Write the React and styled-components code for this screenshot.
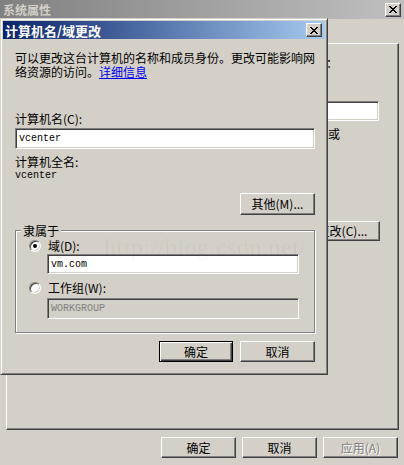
import React from 'react';
import styled, { createGlobalStyle, css } from 'styled-components';

const FACE = '#D4D0C8';
const cjk = `"Noto Sans CJK SC", "Noto Sans", sans-serif`;
const mono = `"Liberation Mono", "DejaVu Sans Mono", monospace`;

const Global = createGlobalStyle`
  html, body { margin: 0; padding: 0; background: ${FACE}; }
  body { font-family: ${cjk}; font-size: 12px; color: #000; }
  * { box-sizing: border-box; }
`;

const Window = styled.div`
  position: relative;
  width: 404px;
  height: 465px;
  overflow: hidden;
  background: ${FACE};
  display: flex;
  flex-direction: column;
`;

const TitleBar = styled.div`
  flex: none;
  height: ${(p) => p.$h}px;
  display: flex;
  align-items: center;
  justify-content: space-between;
  padding: 0 ${(p) => p.$pr}px 0 ${(p) => p.$pl}px;
  background: linear-gradient(90deg, ${(p) => p.$from}, ${(p) => p.$to});
`;

const TitleText = styled.span`
  font-weight: 700;
  font-size: ${(p) => p.$size}px;
  line-height: 1;
  color: ${(p) => p.$color};
  white-space: nowrap;
`;

const CloseBtn = styled.div`
  width: 16px;
  height: 14px;
  background: ${FACE};
  border: 1px solid;
  border-color: #fff #404040 #404040 #fff;
  box-shadow: inset -1px -1px #808080;
  display: flex;
  align-items: center;
  justify-content: center;
`;

const CloseGlyph = () => (
  <svg width="8" height="7" viewBox="0 0 8 7" shapeRendering="crispEdges">
    <g fill="#000">
      <rect x="0" y="0" width="2" height="1" />
      <rect x="6" y="0" width="2" height="1" />
      <rect x="1" y="1" width="2" height="1" />
      <rect x="5" y="1" width="2" height="1" />
      <rect x="2" y="2" width="4" height="1" />
      <rect x="3" y="3" width="2" height="1" />
      <rect x="2" y="4" width="4" height="1" />
      <rect x="1" y="5" width="2" height="1" />
      <rect x="5" y="5" width="2" height="1" />
      <rect x="0" y="6" width="2" height="1" />
      <rect x="6" y="6" width="2" height="1" />
    </g>
  </svg>
);

const OuterBody = styled.div`
  flex: 1;
  display: flex;
  flex-direction: column;
  padding: 24px 5px 0 6px;
`;

const Panel = styled.div`
  height: 387px;
  border: 1px solid;
  border-color: #fff #404040 #404040 #fff;
  box-shadow: inset -1px -1px #808080;
  padding: 12px 18px 0 13px;
  display: flex;
  flex-direction: column;
  overflow: hidden;
`;

const Line = styled.div`
  line-height: 14px;
  white-space: nowrap;
  margin-top: ${(p) => p.$mt || 0}px;
  padding-left: ${(p) => p.$pl || 0}px;
  font-family: ${(p) => (p.$mono ? mono : cjk)};
  font-size: ${(p) => (p.$mono ? 10 : 12)}px;
`;

const FieldGrid = styled.div`
  display: grid;
  grid-template-columns: 224px minmax(0, 1fr);
  row-gap: 6px;
  align-items: center;
  margin-top: 31px;
`;

const TextBox = styled.div`
  height: ${(p) => p.$h}px;
  margin-top: ${(p) => p.$mt || 0}px;
  margin-left: ${(p) => p.$ml || 0}px;
  margin-right: ${(p) => p.$mr || 0}px;
  background: ${(p) => (p.$disabled ? FACE : '#fff')};
  color: ${(p) => (p.$disabled ? '#808080' : '#000')};
  border: 1px solid;
  border-color: #808080 #fff #fff #808080;
  box-shadow: inset 1px 1px #404040, inset -1px -1px ${FACE};
  display: flex;
  align-items: center;
  padding: 0 3px;
  font-family: ${mono};
  font-size: 10px;
  white-space: nowrap;
  overflow: hidden;
`;

const Button = styled.div`
  flex: none;
  width: ${(p) => p.$w || 75}px;
  height: ${(p) => p.$h || 21}px;
  margin-top: ${(p) => p.$mt || 0}px;
  align-self: ${(p) => p.$align || 'auto'};
  background: ${FACE};
  display: flex;
  align-items: center;
  justify-content: center;
  font-size: 12px;
  line-height: 1;
  white-space: nowrap;
  ${(p) =>
    p.$default
      ? css`
          border: 1px solid #000;
          box-shadow: inset 1px 1px #fff, inset -1px -1px #404040, inset -2px -2px #808080;
        `
      : css`
          border: 1px solid;
          border-color: #fff #404040 #404040 #fff;
          box-shadow: inset -1px -1px #808080;
        `}
  ${(p) =>
    p.$disabled &&
    css`
      color: #808080;
      text-shadow: 1px 1px 0 #fff;
    `}
`;

const ButtonRow = styled.div`
  display: flex;
  justify-content: flex-end;
  gap: ${(p) => p.$gap}px;
  margin-top: ${(p) => p.$mt}px;
  margin-right: ${(p) => p.$mr || 0}px;
`;

const Dialog = styled.div`
  position: absolute;
  left: 0;
  top: 18px;
  width: 328px;
  height: 357px;
  background: ${FACE};
  border: 1px solid;
  border-color: ${FACE} #404040 #404040 ${FACE};
  box-shadow: inset 1px 1px #fff, inset -1px -1px #808080;
  padding: 2px;
  display: flex;
  flex-direction: column;
`;

const DialogBody = styled.div`
  flex: 1;
  display: flex;
  flex-direction: column;
  padding: 12px 10px 0 12px;
`;

const Link = styled.span`
  color: #0000ee;
  text-decoration: underline;
`;

const GroupBox = styled.div`
  position: relative;
  height: 103px;
  margin-top: 15px;
  border: 1px solid #808080;
  box-shadow: inset 1px 1px #fff, 1px 1px 0 #fff;
  padding: 8px 15px 0 13px;
  display: flex;
  flex-direction: column;
`;

const Legend = styled.span`
  position: absolute;
  top: -7px;
  left: 5px;
  padding: 0 2px;
  background: ${FACE};
  line-height: 14px;
`;

const RadioRow = styled.div`
  display: flex;
  align-items: center;
  gap: 7px;
  height: 14px;
  margin-top: ${(p) => p.$mt || 0}px;
  line-height: 14px;
`;

const Radio = styled.div`
  position: relative;
  width: 12px;
  height: 12px;
  border-radius: 50%;
  background: #fff;
  border: 1px solid;
  border-color: #808080 #fff #fff #808080;
  box-shadow: inset 1px 1px #404040, inset -1px -1px ${FACE};
  &::after {
    content: '';
    display: ${(p) => (p.$checked ? 'block' : 'none')};
    position: absolute;
    left: 3px;
    top: 3px;
    width: 4px;
    height: 4px;
    border-radius: 50%;
    background: #000;
  }
`;

const Watermark = styled.div`
  position: absolute;
  left: 104px;
  top: 234px;
  font-family: "Liberation Serif", serif;
  font-size: 24px;
  letter-spacing: 0.5px;
  color: rgba(0, 0, 0, 0.04);
  pointer-events: none;
  white-space: nowrap;
`;

export default function App() {
  return (
    <>
      <Global />
      <Window>
        <TitleBar $h={19} $pl={3} $pr={3} $from="#808080" $to="#C0C0C0">
          <TitleText $size={12} $color={FACE}>系统属性</TitleText>
          <CloseBtn>
            <CloseGlyph />
          </CloseBtn>
        </TitleBar>
        <OuterBody>
          <Panel>
            <Line $pl={78}>系统使用以下信息在网络中标识这台计算机：</Line>
            <FieldGrid>
              <Line>计算机描述(D):</Line>
              <TextBox $h={20} $mr={1} />
              <span />
              <Line>例如厨房计算机或</Line>
            </FieldGrid>
            <Button $align="flex-end" $mt={80} $h={20}>更改(C)...</Button>
          </Panel>
          <ButtonRow $gap={6} $mt={7} $mr={1}>
            <Button>确定</Button>
            <Button>取消</Button>
            <Button $disabled>应用(A)</Button>
          </ButtonRow>
        </OuterBody>

        <Dialog>
          <TitleBar $h={18} $pl={2} $pr={3} $from="#0A246A" $to="#A6CAF0">
            <TitleText $size={13} $color="#fff">计算机名/域更改</TitleText>
            <CloseBtn>
              <CloseGlyph />
            </CloseBtn>
          </TitleBar>
          <DialogBody>
            <Line>可以更改这台计算机的名称和成员身份。更改可能影响网</Line>
            <Line>
              络资源的访问。<Link>详细信息</Link>
            </Line>
            <Line $mt={33}>计算机名(C):</Line>
            <TextBox $h={21} $mt={2}>vcenter</TextBox>
            <Line $mt={6}>计算机全名:</Line>
            <Line $mono>vcenter</Line>
            <Button $align="flex-end" $mt={10} $h={22}>其他(M)...</Button>
            <GroupBox>
              <Legend>隶属于</Legend>
              <RadioRow>
                <Radio $checked />
                <span>域(D):</span>
              </RadioRow>
              <TextBox $h={20} $mt={1} $ml={18}>vm.com</TextBox>
              <RadioRow $mt={7}>
                <Radio />
                <span>工作组(W):</span>
              </RadioRow>
              <TextBox $h={21} $mt={3} $ml={18} $disabled>WORKGROUP</TextBox>
            </GroupBox>
            <ButtonRow $gap={7} $mt={8}>
              <Button $default $w={74}>确定</Button>
              <Button>取消</Button>
            </ButtonRow>
          </DialogBody>
        </Dialog>

        <Watermark>http://blog.csdn.net/</Watermark>
      </Window>
    </>
  );
}
